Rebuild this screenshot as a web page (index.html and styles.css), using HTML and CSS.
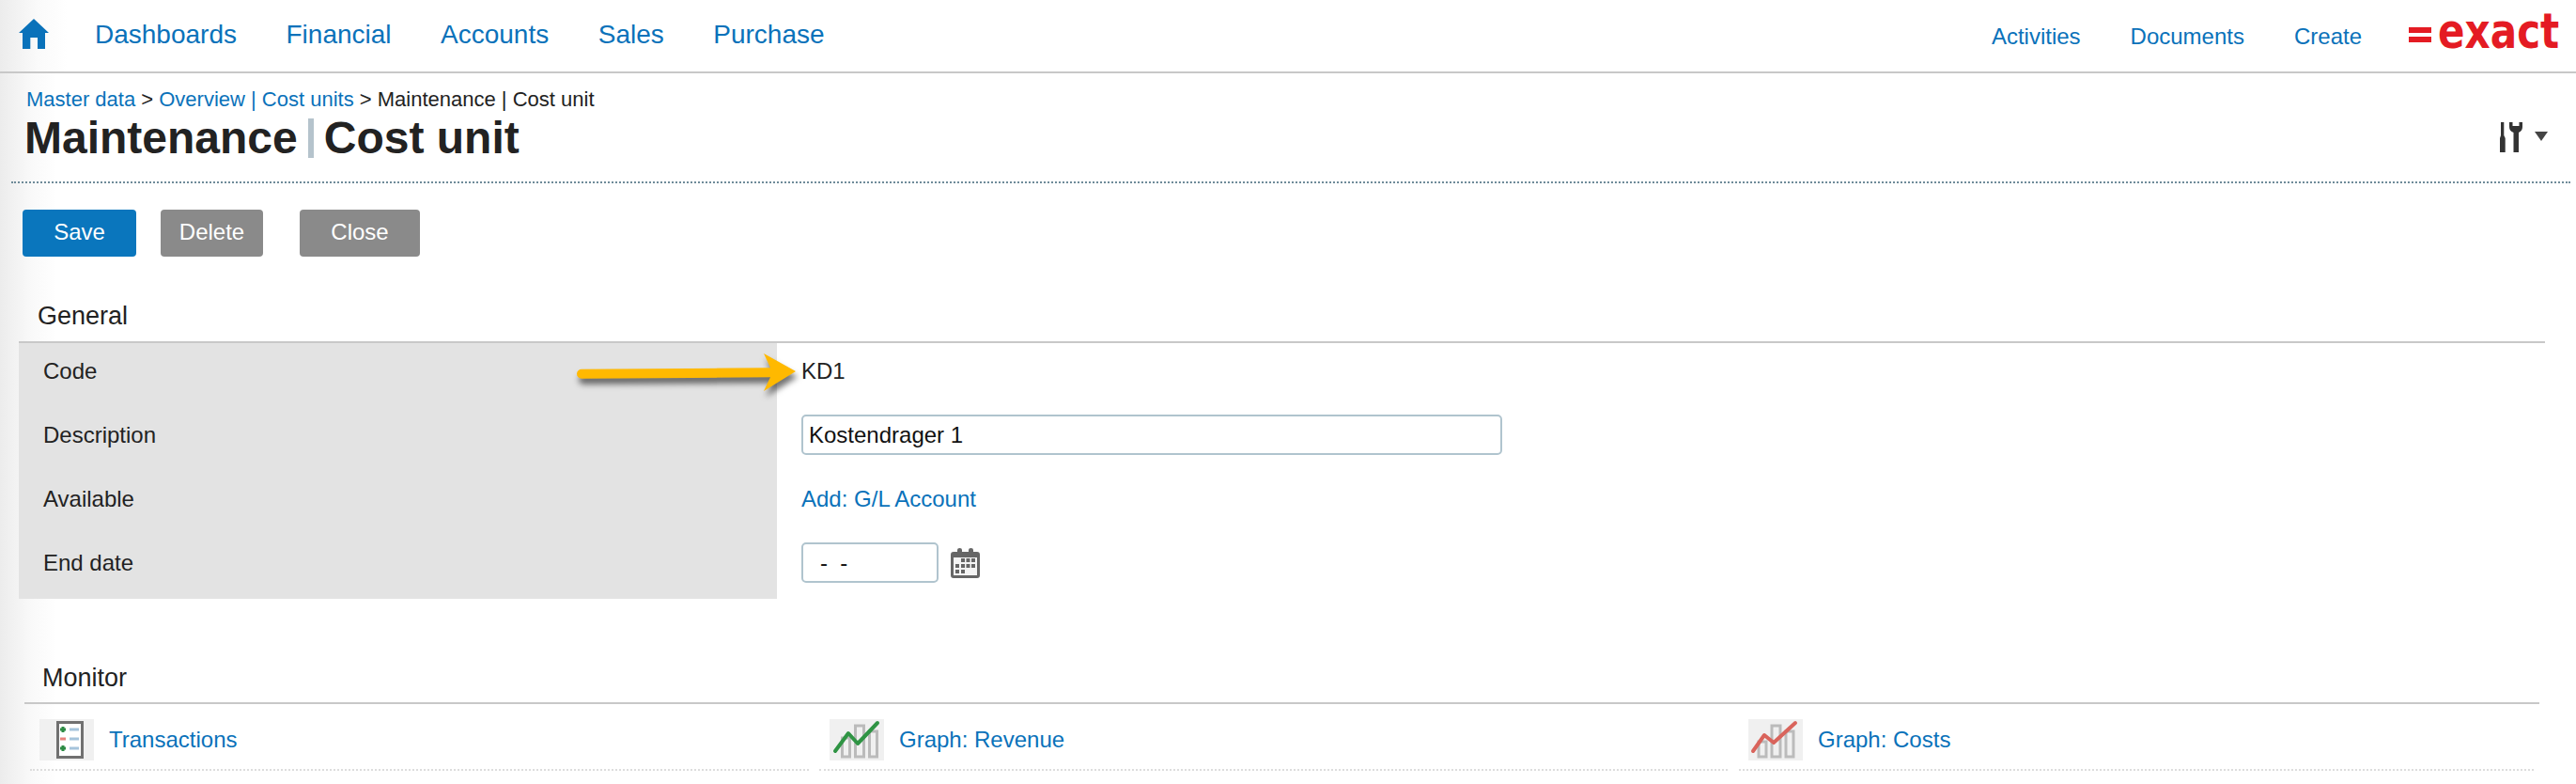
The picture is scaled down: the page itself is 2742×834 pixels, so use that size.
FILE: index.html
```html
<!DOCTYPE html>
<html lang="en">
<head>
<meta charset="utf-8">
<title>Maintenance | Cost unit</title>
<link rel="stylesheet" href="styles.css">
</head>
<body>
<header class="topbar">
  <nav class="mainnav">
    <a class="home" href="#" aria-label="Home">
      <svg width="32" height="32" viewBox="0 0 32 32"><path fill="#0a72ba" d="M16 0 32 15H28V32H20V20H12.300V32H4V15H0Z"/></svg>
    </a>
    <a href="#">Dashboards</a>
    <a href="#">Financial</a>
    <a href="#">Accounts</a>
    <a href="#">Sales</a>
    <a href="#">Purchase</a>
  </nav>
  <nav class="sidenav">
    <a href="#">Activities</a>
    <a href="#">Documents</a>
    <a href="#">Create</a>
  </nav>
  <svg class="logo" width="172" height="52" viewBox="0 0 172 52" role="img" aria-label="Exact">
    <rect x="0" y="25" width="24" height="6" fill="#e41b23"/>
    <rect x="0" y="35" width="24" height="6" fill="#e41b23"/>
    <text class="logo-text" transform="translate(31 47) scale(.826 1)">exact</text>
  </svg>
</header>

<section class="pagehead">
  <div class="crumbs"><a href="#">Master data</a> &gt; <a href="#">Overview | Cost units</a> &gt; Maintenance | Cost unit</div>
  <div class="titlerow">
    <h1 class="title">Maintenance<span class="title-sep"></span>Cost unit</h1>
    <div class="tools">
      <svg width="24" height="32" viewBox="0 0 24 32"><g fill="#333"><path d="M1 0H4.300V14L5.700 17V32H0V17L1 14Z"/><path d="M10 0H13.500V4H20.500V0H24V5C24 8 22.500 10 20 11V32H14.500V11C11.500 10 10 8 10 5Z"/></g></svg>
      <svg class="caret" width="14" height="10" viewBox="0 0 14 10"><path fill="#444" d="M0 0H14L7 10Z"/></svg>
    </div>
  </div>
</section>

<div class="actions">
  <button class="btn btn-primary btn-save" type="button">Save</button>
  <button class="btn btn-delete" type="button">Delete</button>
  <button class="btn btn-close" type="button">Close</button>
</div>

<section class="general">
  <h2 class="section-title general-title">General</h2>
  <div class="form">
    <div class="lbl">Code</div>
    <div class="val val-text">KD1</div>
    <div class="lbl">Description</div>
    <div class="val"><input class="field field-wide" type="text" value="Kostendrager 1"></div>
    <div class="lbl">Available</div>
    <div class="val val-text"><a href="#">Add: G/L Account</a></div>
    <div class="lbl">End date</div>
    <div class="val val-date">
      <input class="field field-date" type="text" value="-  -">
      <svg class="cal" width="31" height="32" viewBox="0 0 31 32">
        <path fill="#666" d="M3 4H7V2Q7 0 9.500 0T12 2V4H19V2Q19 0 21.500 0T24 2V4H28Q31 4 31 7V29Q31 32 28 32H3Q0 32 0 29V7Q0 4 3 4Z"/>
        <rect x="3" y="10" width="25" height="19" fill="#f4f4f4"/>
        <g fill="#666">
          <rect x="11" y="11" width="4" height="4"/><rect x="16.500" y="11" width="4" height="4"/><rect x="22" y="11" width="4" height="4"/>
          <rect x="5" y="17" width="4" height="4"/><rect x="11" y="17" width="4" height="4"/><rect x="16.500" y="17" width="4" height="4"/><rect x="22" y="17" width="4" height="4"/>
          <rect x="5" y="23" width="4" height="4"/><rect x="11" y="23" width="4" height="4"/>
        </g>
      </svg>
    </div>
  </div>
  <svg class="arrow" width="250" height="56" viewBox="0 0 250 56" aria-hidden="true">
    <path fill="#ffb900" d="M10 16.700 211 15.300 204 0 238 19 204 40 211 25.300 10 26.700A5 5 0 0 1 10 16.700Z"/>
  </svg>
</section>

<section class="monitor">
  <h2 class="section-title monitor-title">Monitor</h2>
</section>
<div class="tiles">
  <div class="tile tile-a">
    <svg class="tile-icon" width="58" height="44" viewBox="0 0 58 44">
      <rect x="19.500" y="3.500" width="26" height="37" fill="#fff" stroke="#707070" stroke-width="3"/>
      <path fill="#2e8b45" d="M23.500 8H26.500V9.500H28V12.500H26.500V14H23.500V12.500H22V9.500H23.500Z"/>
      <rect x="22" y="19.500" width="6" height="3" fill="#e8817c"/>
      <path fill="#2e8b45" d="M23.500 28H26.500V29.500H28V32.500H26.500V34H23.500V32.500H22V29.500H23.500Z"/>
      <g fill="#a5c4dc"><rect x="32" y="9.500" width="10" height="3"/><rect x="32" y="19.500" width="10" height="3"/><rect x="32" y="29.500" width="10" height="3"/></g>
    </svg>
    <a href="#">Transactions</a>
  </div>
  <div class="tile tile-b">
    <svg class="tile-icon" width="58" height="44" viewBox="0 0 58 44">
      <g fill="#f0f0f0" stroke="#bbb" stroke-width="3"><rect x="13.500" y="20" width="8" height="20"/><rect x="27.500" y="7" width="9" height="33"/><rect x="42.500" y="13" width="8" height="27"/></g>
      <path fill="none" stroke="#2f9444" stroke-width="4" stroke-linecap="round" stroke-linejoin="round" d="M6 34 20 15 30 26 51 4"/>
    </svg>
    <a href="#">Graph: Revenue</a>
  </div>
  <div class="tile tile-c">
    <svg class="tile-icon" width="58" height="44" viewBox="0 0 58 44">
      <g fill="#f0f0f0" stroke="#bbb" stroke-width="3"><rect x="11" y="24" width="8" height="16"/><rect x="25" y="7" width="9" height="33"/><rect x="40" y="13" width="8" height="27"/></g>
      <path fill="none" stroke="#d9645c" stroke-width="4" stroke-linecap="round" stroke-linejoin="round" d="M5 34 17 17 27 25 50 4"/>
    </svg>
    <a href="#">Graph: Costs</a>
  </div>
</div>
</body>
</html>
```
FILE: styles.css
```css
* { box-sizing: border-box; }
html, body { margin: 0; padding: 0; }
body {
  width: 2742px;
  height: 834px;
  overflow: hidden;
  font-family: "Liberation Sans", Arial, sans-serif;
  font-size: 24px;
  color: #222;
  background: linear-gradient(to right, #ececec 0, #f8f8f8 30px, #fff 60px);
}
a { color: #0a72ba; text-decoration: none; }

.topbar {
  display: flex;
  height: 78px;
  padding-left: 20px;
  border-bottom: 2px solid #c8c8c8;
  background: linear-gradient(to right, #ececec 0, #fafafa 40px, #fff 72px);
}
.mainnav {
  display: flex;
  gap: 52.500px;
  padding-top: 21px;
  font-size: 28px;
  line-height: 31px;
}
.home { height: 32px; margin-top: -1px; margin-right: -3.500px; }
.home svg { display: block; }
.sidenav {
  display: flex;
  gap: 53px;
  margin-left: auto;
  padding-top: 25px;
  font-size: 24px;
  line-height: 28px;
}
.logo { flex: none; margin: 4px 6px 0 50px; }
.logo-text {
  font-family: "DejaVu Sans", sans-serif;
  font-weight: 700;
  font-size: 51px;
  fill: #e41b23;
}

.pagehead {
  margin: 0 6px 0 12px;
  padding: 15px 24px 0 14px;
  height: 117px;
  border-bottom: 2px dotted #6f8b99;
}
.crumbs { font-size: 22px; line-height: 26px; margin-left: 2px; }
.titlerow { display: flex; justify-content: space-between; margin-top: 1px; }
.title {
  margin: 0;
  display: flex;
  align-items: center;
  font-size: 48px;
  line-height: 54px;
  font-weight: 700;
  color: #222;
}
.title-sep {
  width: 6px;
  height: 42px;
  margin: 0 11px 0 11px;
  background: #b5c3cc;
}
.tools { display: flex; gap: 13px; padding-top: 10px; }
.tools svg { display: block; }
.caret { margin-top: 10px; }

.actions {
  display: flex;
  margin: 28px 0 0 24px;
}
.btn {
  height: 50px;
  padding: 0 0 2px;
  border: 0;
  border-radius: 4px;
  font: 24px "Liberation Sans", Arial, sans-serif;
  color: #fff;
  background: #8a8a8a;
}
.btn-primary { background: #0a76bd; }
.btn-save { width: 121px; margin-right: 26px; }
.btn-delete { width: 109px; margin-right: 39px; }
.btn-close { width: 128px; }

.section-title {
  margin: 0;
  font-size: 27px;
  line-height: 32px;
  font-weight: 400;
  color: #222;
  border-bottom: 2px solid #c8c8c8;
}
.general {
  position: relative;
  margin: 47px 33px 0 20px;
}
.general-title { padding: 0 0 11px 20px; }
.form {
  display: grid;
  grid-template-columns: 807px 1fr;
  grid-auto-rows: 68px;
}
.lbl {
  padding: 16px 0 0 26px;
  line-height: 28px;
  background: #e3e3e3;
}
.val { padding: 8px 0 0 26px; }
.val-text { padding-top: 16px; line-height: 28px; }
.val-date { display: flex; align-items: flex-start; gap: 13px; }
.field {
  display: block;
  height: 43px;
  padding: 0 6px;
  border: 2px solid #b0c4ce;
  border-radius: 5px;
  font: 24px "Liberation Sans", Arial, sans-serif;
  color: #111;
  background: #fff;
  outline: 0;
}
.field-wide { width: 746px; }
.field-date { width: 146px; padding-left: 18px; }
.cal { margin-top: 6px; }
.arrow {
  position: absolute;
  left: 589px;
  top: 56px;
  overflow: visible;
  filter: drop-shadow(2px 6px 3px rgba(0, 0, 0, .55));
}

.monitor { margin: 68px 39px 0 26px; }
.monitor-title { padding: 0 0 10px 19px; }
.tiles {
  display: flex;
  margin: 16px 0 0 32px;
}
.tile {
  display: flex;
  align-items: center;
  gap: 16px;
  height: 55px;
  padding-bottom: 9px;
  padding-left: 10px;
  border-bottom: 2px dotted #ddd;
}
.tile-a { width: 829px; margin-right: 11px; }
.tile-b { width: 967px; margin-right: 12px; padding-left: 11px; }
.tile-c { width: 846px; }
.tile-icon { display: block; background: #f0f0f0; flex: none; }
```
